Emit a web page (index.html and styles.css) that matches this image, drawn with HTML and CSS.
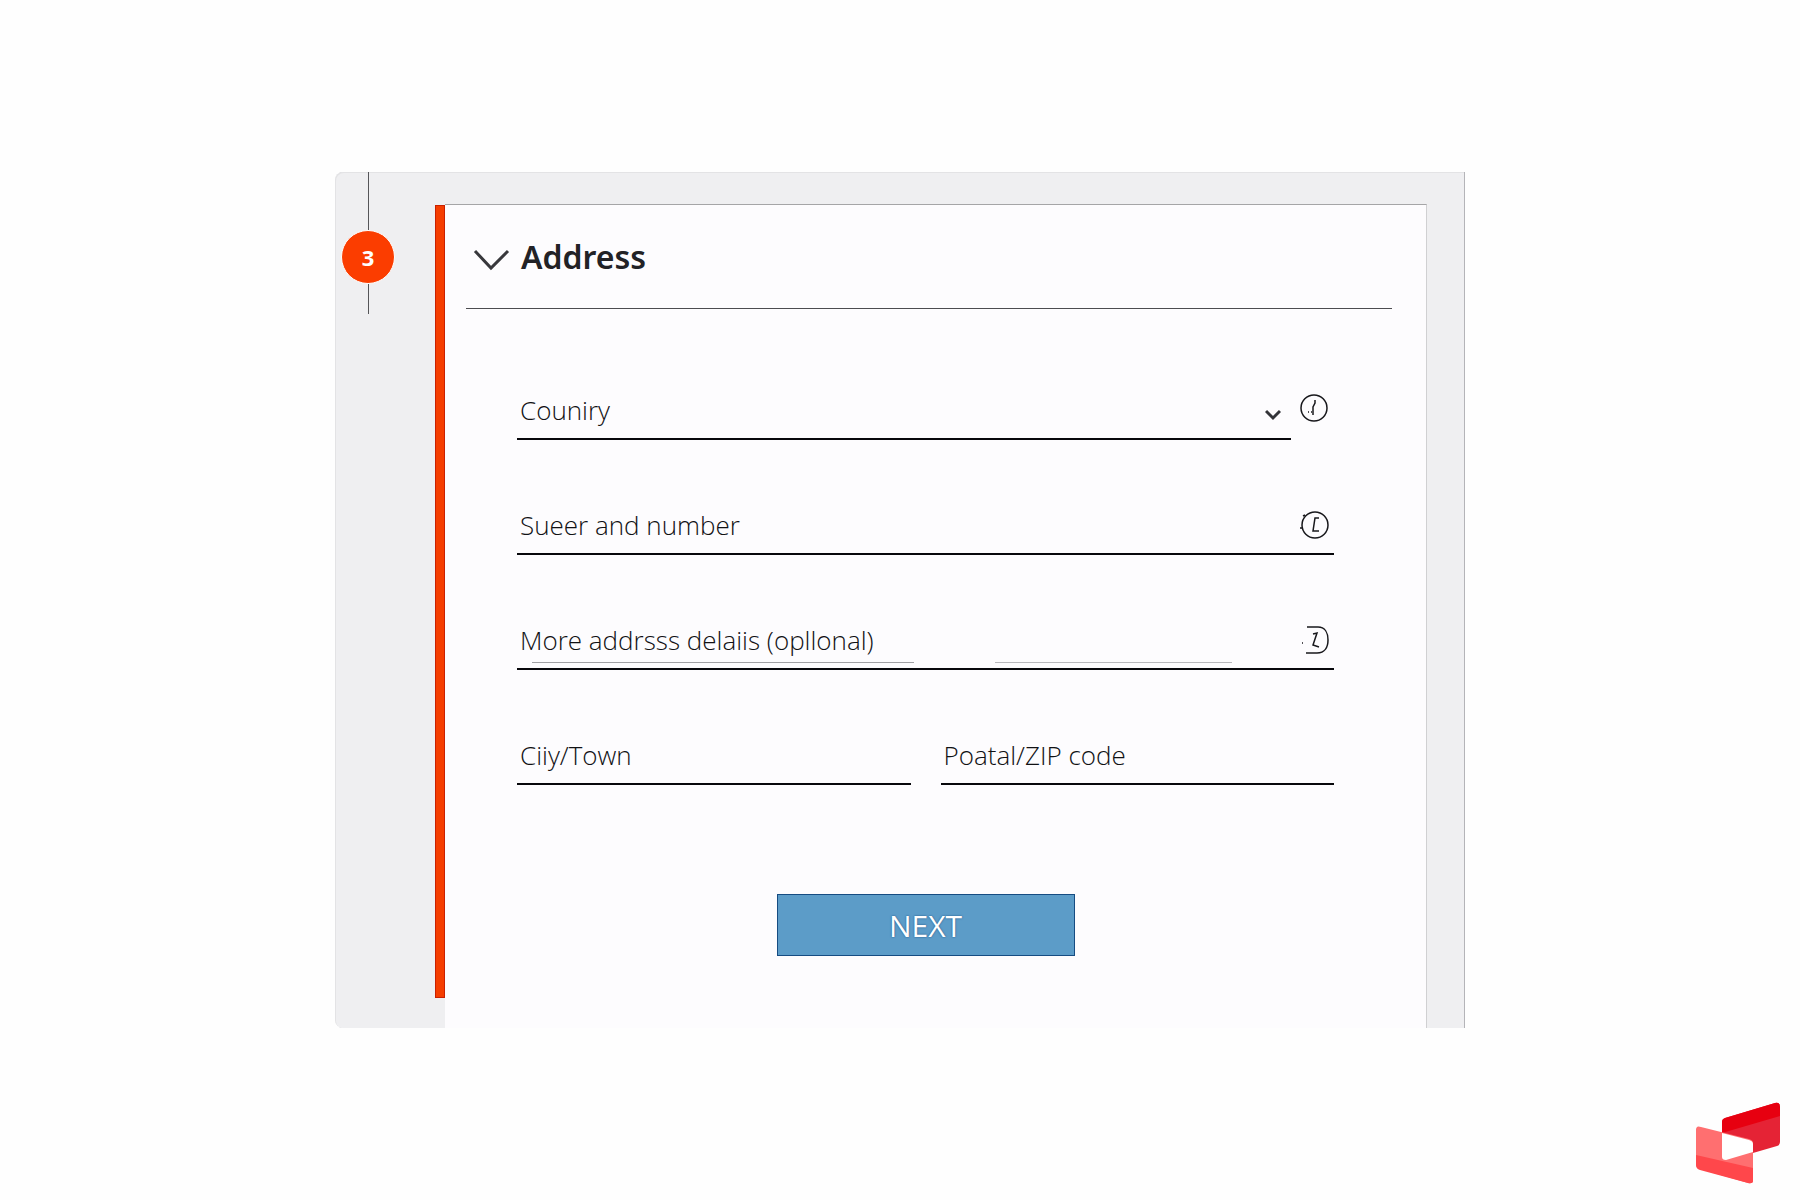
FILE: index.html
```html
<!DOCTYPE html>
<html lang="en">
<head>
    <meta charset="UTF-8">
    <meta name="viewport" content="width=device-width, initial-scale=1.0">
    <title>Address</title>
    <link rel="stylesheet" href="styles.css">
</head>
<body>
    <main class="panel">
        <div class="timeline">
            <div class="timeline-line"></div>
            <div class="step">3</div>
            <div class="timeline-line timeline-line-end"></div>
        </div>
        <div class="accent"></div>
        <section class="card">
            <header class="card-header">
                <svg class="chevron" width="38" height="24" viewBox="0 0 38 24">
                    <path d="M2 3L18 20L35 3" fill="none" stroke="#38383c" stroke-width="3" />
                </svg>
                <h1>Address</h1>
            </header>
            <form class="form">
                <div class="row">
                    <div class="field">
                        <label for="country">Couniry</label>
                        <select id="country">
                            <option value=""></option>
                        </select>
                        <svg class="arrow" width="16" height="12" viewBox="0 0 16 12">
                            <path d="M1 2L8 9L15 2" fill="none" stroke="#333338" stroke-width="3" />
                        </svg>
                    </div>
                    <button type="button" class="info" aria-label="Country info">
                        <svg width="32" height="30" viewBox="0 0 32 30">
                            <circle cx="17" cy="15" r="13" />
                            <path d="M18 7V10L16 14V22" />
                            <path d="M11 19H12M14 19H15" />
                        </svg>
                    </button>
                </div>
                <div class="field">
                    <label for="street">Sueer and number</label>
                    <input type="text" id="street">
                    <button type="button" class="info" aria-label="Street info">
                        <svg width="32" height="30" viewBox="0 0 32 30">
                            <circle cx="17" cy="15" r="13" />
                            <path d="M21 8H17L15 21H21" />
                            <path d="M2 18H4M5 6L7 5" />
                        </svg>
                    </button>
                </div>
                <div class="field field-hint">
                    <label for="details">More addrsss delaiis (opllonal)</label>
                    <input type="text" id="details">
                    <button type="button" class="info" aria-label="Details info">
                        <svg width="32" height="30" viewBox="0 0 32 30">
                            <path d="M9 2H20C27 2 30 8 30 15C30 22 27 28 19 28H8" />
                            <path d="M15 9L19 8L15 20L21 22" />
                            <path d="M4 18H5" />
                        </svg>
                    </button>
                </div>
                <div class="columns">
                    <div class="field">
                        <label for="city">Ciiy/Town</label>
                        <input type="text" id="city">
                    </div>
                    <div class="field">
                        <label for="zip">Poatal/ZIP code</label>
                        <input type="text" id="zip">
                    </div>
                </div>
                <button type="submit" class="next-btn">NEXT</button>
            </form>
        </section>
    </main>

    <svg class="logo" width="86" height="84" viewBox="0 0 86 84">
        <path d="M27 20Q27 17 30 16L80 1Q85 0 85 5V40Q85 43 82 44L27 60Z" fill="#e52335" />
        <path d="M27 20Q27 17 30 16L80 1Q85 0 85 5V14L27 31Z" fill="#e70010" />
        <path d="M1 30V5Q1 0 6 2L54 14Q58 15 58 18V55Q58 59 53 58L5 44Q1 43 1 39Z" fill="#ff6f70" transform="translate(0 23)" />
        <path d="M1 53L58 66V79Q58 82 53 81L5 68Q1 67 1 63Z" fill="#ff474b" />
        <path d="M27 31L54 38Q58 39 58 42V50L31 58Q27 58 27 55Z" fill="#fff" />
    </svg>
</body>
</html>
```
FILE: styles.css
```css
* {
    margin: 0;
    padding: 0;
    box-sizing: border-box;
}

body {
    min-height: 100vh;
    display: flex;
    justify-content: center;
    align-items: center;
    background: #fefefe;
    color: #222226;
    font-family: "Open Sans", sans-serif;
}

.panel {
    display: grid;
    grid-template-columns: 100px 10px minmax(0, 1fr);
    width: 95%;
    max-width: 1130px;
    padding: 32px 38px 0 0;
    background: #efeff1;
    border-radius: 8px 0 0 8px;
    box-shadow: inset -1px 0 #b4b4b8, inset 1px 1px #e3e3e5;
}

.timeline {
    display: flex;
    flex-direction: column;
    align-items: center;
    width: 66px;
    margin-top: -32px;
}

.timeline-line {
    width: 1px;
    height: 58px;
    background: #555558;
}

.timeline-line-end {
    height: 30px;
}

.step {
    display: flex;
    justify-content: center;
    align-items: center;
    width: 54px;
    height: 54px;
    border: 1px solid #fff;
    border-radius: 50%;
    background: #fb3d00;
    color: #fff;
    font: bold 22px "Open Sans", sans-serif;
}

.accent {
    margin: 1px 0 30px;
    background: #f53d00;
    border: 1px solid #c92000;
}

.card {
    background: #fdfcfe;
    border-top: 1px solid #a5a5a7;
    border-right: 1px solid #d0d0d2;
}

.card-header {
    display: flex;
    align-items: center;
    gap: 10px;
    height: 104px;
    margin: 0 34px 0 21px;
    padding-left: 7px;
    border-bottom: 1px solid #4c4c50;
}

.chevron {
    margin-top: 6px;
}

h1 {
    font: 600 32px "Noto Sans", sans-serif;
}

.form {
    display: flex;
    flex-direction: column;
    gap: 56px;
    padding: 72px 92px 72px 72px;
}

.row {
    display: flex;
    gap: 6px;
}

.columns {
    display: grid;
    grid-template-columns: repeat(2, minmax(0, 1fr));
    gap: 30px;
}

.field {
    display: flex;
    align-items: center;
    flex: 1;
    min-height: 59px;
    padding: 0 4px 0 3px;
    border-bottom: 2px solid #08080c;
}

.field label {
    color: #111114;
    font: 300 26px "Open Sans", sans-serif;
}

.field input,
.field select {
    flex: 1;
    width: 0;
    min-width: 0;
    height: 36px;
    border: none;
    outline: none;
    background: transparent;
    font-size: 26px;
    appearance: none;
}

/* faint helper rule above the underline */
.field-hint {
    background: linear-gradient(90deg, #a0a0a4 382px, transparent 382px 463px, #b8b8bc 463px 700px, transparent 700px) 15px 51px / 100% 1px no-repeat;
}

.arrow {
    margin: 10px 6px 0 0;
}

.info {
    width: 32px;
    height: 30px;
    border: none;
    background: none;
    cursor: pointer;
}

.row .info {
    margin: 12px 5px 0 0;
}

.info svg {
    display: block;
    fill: none;
    stroke: #18181c;
    stroke-width: 1.5;
}

.next-btn {
    align-self: center;
    width: 298px;
    height: 62px;
    margin-top: 53px;
    border: 1px solid #164c82;
    background: #5c9cc8;
    color: #fff;
    font: 30px "Open Sans", sans-serif;
    text-shadow: 0 0 2px #164c82;
    cursor: pointer;
}

.logo {
    position: absolute;
    right: 19px;
    bottom: 14px;
}

@media (max-width: 600px) {
    .form {
        padding: 40px 20px;
    }

    .columns {
        grid-template-columns: 1fr;
    }
}
```
